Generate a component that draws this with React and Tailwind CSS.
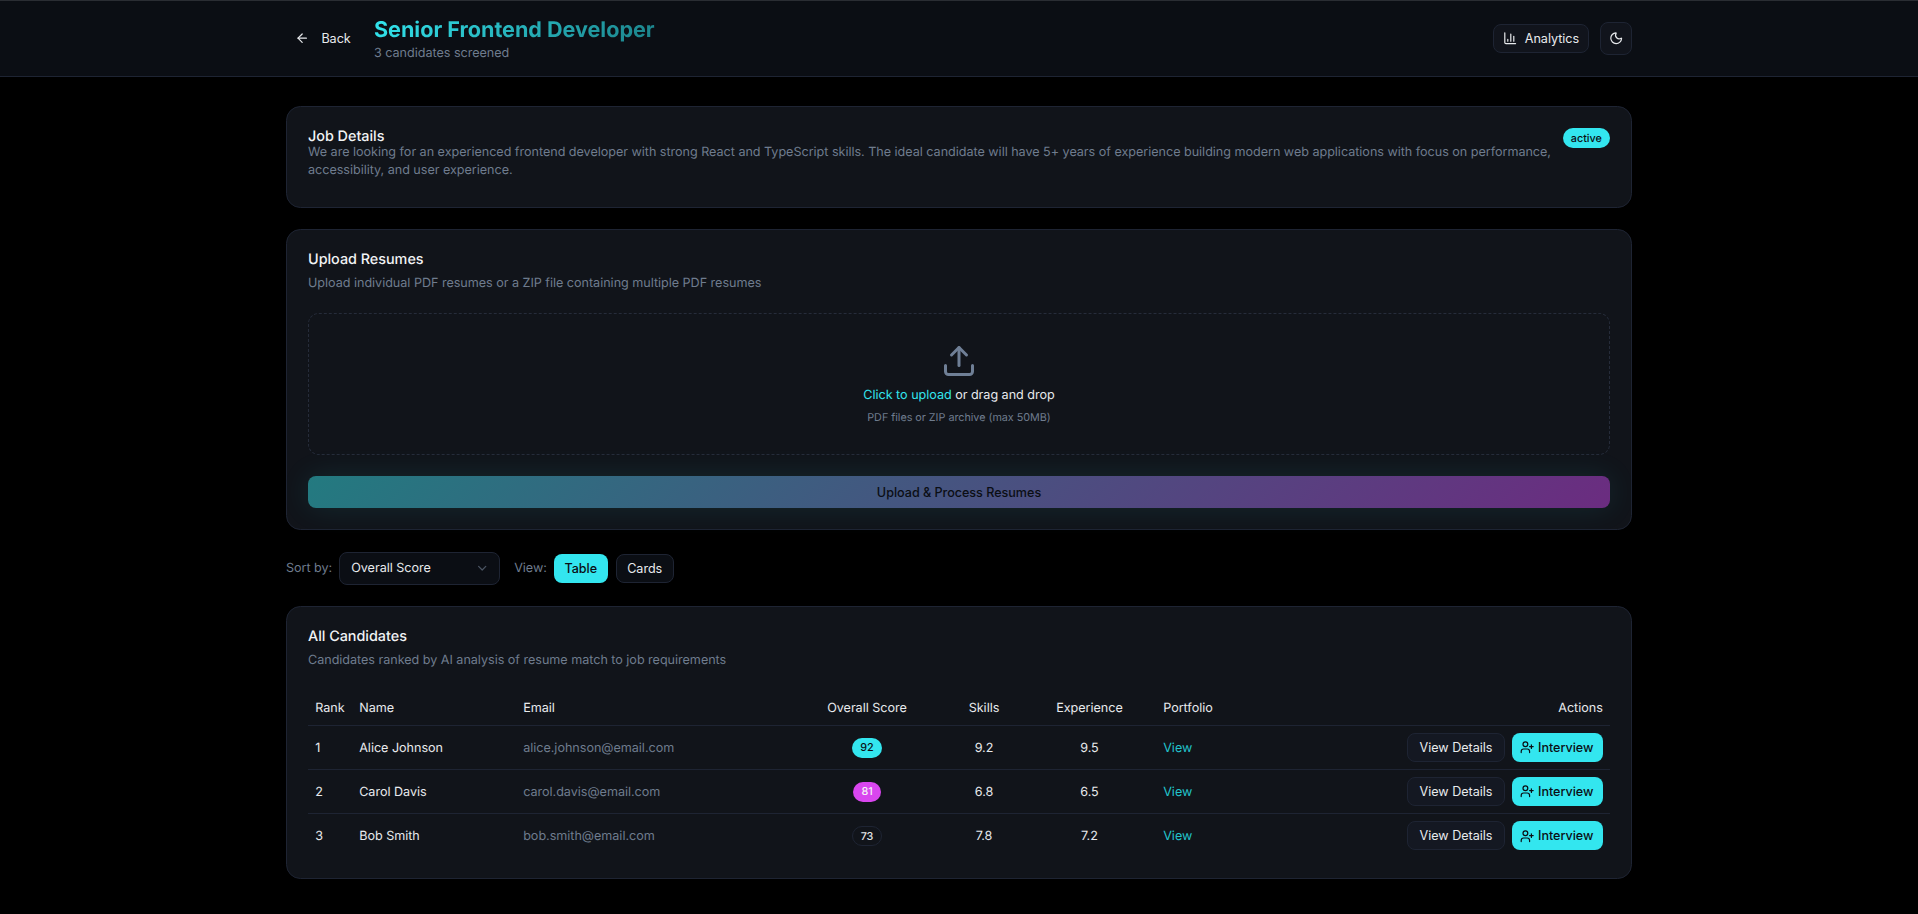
import React from 'react';
import { ArrowLeft, ChartColumn, Moon, Upload, ChevronDown, UserPlus } from 'lucide-react';

const candidates = [
    { rank: 1, name: 'Alice Johnson', email: 'alice.johnson@email.com', score: 92, skills: '9.2', exp: '9.5', tone: 'cyan' },
    { rank: 2, name: 'Carol Davis', email: 'carol.davis@email.com', score: 81, skills: '6.8', exp: '6.5', tone: 'pink' },
    { rank: 3, name: 'Bob Smith', email: 'bob.smith@email.com', score: 73, skills: '7.8', exp: '7.2', tone: 'plain' },
];

const scoreClass = {
    cyan: 'bg-[#33e6ef] text-[#0b0e14] border-transparent',
    pink: 'bg-[#d946ef] text-[#f5f5f5] border-transparent',
    plain: 'bg-transparent text-[#e5e7eb] border-[#1e2433]',
};

const Card = ({ className = '', children }) => (
    <div className={`rounded-[14.4px] border border-[#1e2433] bg-[#11141a] ${className}`}>{children}</div>
);

const App = () => {
    return (
        <div className="min-h-[914px] bg-black text-[#e8eaed] font-['Inter',sans-serif] text-[12.6px] tracking-[-0.025px] [text-rendering:geometricPrecision]">
            <header className="h-[77px] border-t border-b border-t-[#2a2d33] border-b-[#1e2433] bg-[#0b0e14]">
                <div className="mx-[286px] h-full flex items-center justify-between">
                    <div className="flex items-center">
                        <button className="flex items-center gap-[12px] pl-[9px] w-[88px] h-[32.4px] font-normal">
                            <ArrowLeft size={14.4} strokeWidth={2} />
                            <span className="pt-[2px]">Back</span>
                        </button>
                        <div className="flex flex-col pt-[2px]">
                            <h1 className="text-[21.6px] leading-[28.8px] font-bold bg-[linear-gradient(135deg,#33e6ef,#1b8088)] bg-clip-text text-transparent">
                                Senior Frontend Developer
                            </h1>
                            <p className="leading-[18px] text-[#6f7c8e]">3 candidates screened</p>
                        </div>
                    </div>
                    <div className="flex items-center gap-[10.8px]">
                        <button className="flex items-center gap-[7.2px] h-[28.8px] px-[8.7px] rounded-[8px] border border-[#1e2433] bg-[#11141c] font-normal">
                            <ChartColumn size={14.4} strokeWidth={2} />
                            <span className="pt-[2px]">Analytics</span>
                        </button>
                        <button className="flex items-center justify-center w-[32.4px] h-[32.4px] rounded-[8px] border border-[#1e2433] bg-[#11141c]">
                            <Moon size={14.4} strokeWidth={2} />
                        </button>
                    </div>
                </div>
            </header>

            <main className="mx-[286px] pt-[28.8px] flex flex-col">
                <Card className="h-[102px] pt-[21.6px] px-[21px] flex items-start gap-[4px]">
                    <div className="flex-1 pt-[0.4px]">
                        <h2 className="text-[14.4px] leading-[15px] font-medium text-[#f1f3f5]">Job Details</h2>
                        <p className="leading-[18px] text-[#6f7c8e]">
                            We are looking for an experienced frontend developer with strong React and TypeScript skills. The ideal candidate will have 5+ years of experience building modern web applications with focus on performance, accessibility, and user experience.
                        </p>
                    </div>
                    <span className="rounded-full bg-[#33e6ef] text-[#0b0e14] text-[10.8px] leading-[14.4px] font-medium px-[8.2px] pt-[3.8px] pb-[1.8px]">active</span>
                </Card>

                <Card className="mt-[21.6px] px-[21px] pt-[18.8px] pb-[21px]">
                    <h2 className="text-[14.4px] leading-[21.6px] font-medium text-[#f1f3f5]">Upload Resumes</h2>
                    <p className="mt-[3.8px] leading-[18px] text-[#6f7c8e]">Upload individual PDF resumes or a ZIP file containing multiple PDF resumes</p>
                    <div className="mt-[20.6px] h-[142px] rounded-[10.8px] border border-dashed border-[#262c3a] flex flex-col items-center pt-[28.8px]">
                        <Upload size={36} strokeWidth={2} className="text-[#6f7f96]" />
                        <div className="mt-[8.4px] leading-[18px]">
                            <span className="text-[#33e6ef]">Click to upload</span> or drag and drop
                        </div>
                        <div className="mt-[6px] text-[10.8px] leading-[14.4px] text-[#6f7c8e]">PDF files or ZIP archive (max 50MB)</div>
                    </div>
                    <button className="mt-[20.8px] pt-[2px] w-full h-[32px] rounded-[8px] bg-[linear-gradient(135deg,#237a80,#6b2c80)] text-[#0b0e14] font-medium shadow-[0_0_30px_rgba(51,230,239,0.1)]">
                        Upload &amp; Process Resumes
                    </button>
                </Card>

                <div className="mt-[22.4px] h-[32.4px] flex items-center">
                    <span className="text-[#6f7c8e] mr-[7.2px] pt-[2px]">Sort by:</span>
                    <div className="w-[160.4px] h-[32.4px] rounded-[8px] border border-[#1e2433] bg-[#0b0e14] flex items-center justify-between pl-[10.8px] pr-[9.6px]">
                        <span className="pt-[2px]">Overall Score</span>
                        <ChevronDown size={14.4} className="text-[#4b5563]" />
                    </div>
                    <span className="ml-[14.4px] text-[#6f7c8e] pt-[2px]">View:</span>
                    <button className="ml-[7.2px] pt-[2px] h-[28.8px] px-[10.4px] rounded-[8px] bg-[#33e6ef] text-[#0b0e14] font-medium">Table</button>
                    <button className="ml-[8.2px] pt-[2px] h-[28.8px] px-[10.5px] rounded-[8px] border border-[#1e2433] bg-[#0b0e14] font-normal">Cards</button>
                </div>

                <Card className="mt-[21.2px] px-[21px] pt-[19.2px] pb-[20.4px]">
                    <h2 className="text-[14.4px] leading-[21.6px] font-medium text-[#f1f3f5]">All Candidates</h2>
                    <p className="mt-[4.2px] leading-[18px] text-[#6f7c8e]">Candidates ranked by AI analysis of resume match to job requirements</p>
                    <table className="mt-[19.6px] w-full table-fixed border-collapse">
                        <colgroup>
                            <col className="w-[44px]" />
                            <col className="w-[164px]" />
                            <col className="w-[273px]" />
                            <col className="w-[156px]" />
                            <col className="w-[78px]" />
                            <col className="w-[133px]" />
                            <col className="w-[162px]" />
                            <col />
                        </colgroup>
                        <thead>
                            <tr className="h-[36px] border-b border-[#1e2433]">
                                <th className="px-[7.2px] pt-[3.6px] text-left font-normal">Rank</th>
                                <th className="px-[7.2px] pt-[3.6px] text-left font-normal">Name</th>
                                <th className="px-[7.2px] pt-[3.6px] text-left font-normal">Email</th>
                                <th className="pt-[3.6px] text-center font-normal">Overall Score</th>
                                <th className="pt-[3.6px] text-center font-normal">Skills</th>
                                <th className="pt-[3.6px] text-center font-normal">Experience</th>
                                <th className="px-[7.2px] pt-[3.6px] text-left font-normal">Portfolio</th>
                                <th className="px-[7.2px] pt-[3.6px] text-right font-normal">Actions</th>
                            </tr>
                        </thead>
                        <tbody>
                            {candidates.map((c, i) => (
                                <tr key={c.rank} className={`h-[44px] ${i < 2 ? 'border-b border-[#1e2433]' : ''}`}>
                                    <td className="px-[7.2px] pt-[3.6px]">{c.rank}</td>
                                    <td className="px-[7.2px] pt-[3.6px] font-normal">{c.name}</td>
                                    <td className="px-[7.2px] pt-[3.6px] text-[#6f7c8e]">{c.email}</td>
                                    <td>
                                        <div className="flex justify-center">
                                            <span className={`rounded-full border px-[7.2px] pt-[2.8px] pb-[0.8px] text-[10.8px] leading-[14.4px] font-medium ${scoreClass[c.tone]}`}>{c.score}</span>
                                        </div>
                                    </td>
                                    <td className="pt-[3.6px] text-center">{c.skills}</td>
                                    <td className="pt-[3.6px] text-center">{c.exp}</td>
                                    <td className="px-[7.2px] pt-[3.6px] text-[#22c4cc]">View</td>
                                    <td className="px-[7.2px]">
                                        <div className="flex items-center justify-end gap-[7.2px]">
                                            <button className="pt-[2px] h-[28.8px] px-[11.4px] rounded-[8px] border border-[#1e2433] bg-[#141822] font-normal">View Details</button>
                                            <button className="h-[28.8px] pl-[8px] pr-[9.4px] rounded-[8px] bg-[#33e6ef] text-[#0b0e14] font-medium flex items-center gap-[3.6px]">
                                                <UserPlus size={14.4} strokeWidth={2} />
                                                <span className="pt-[2px]">Interview</span>
                                            </button>
                                        </div>
                                    </td>
                                </tr>
                            ))}
                        </tbody>
                    </table>
                </Card>
            </main>
        </div>
    );
};

export default App;
